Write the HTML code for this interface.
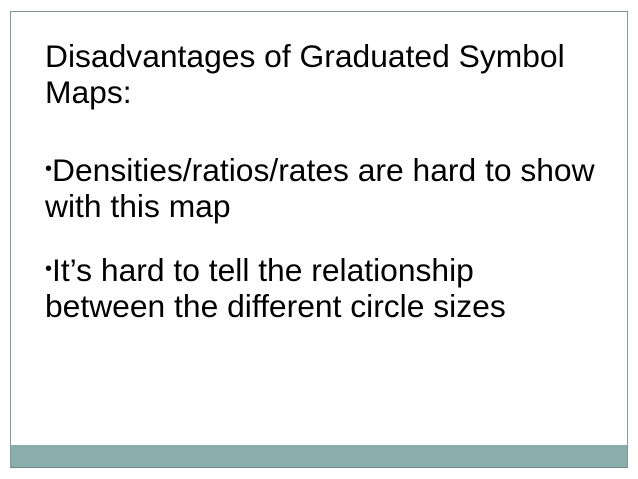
<!DOCTYPE html>
<html><head><style>
html,body{margin:0;padding:0;background:#fff;width:638px;height:479px;overflow:hidden}
.box{position:absolute;left:10px;top:11px;width:616px;height:455px;border:1px solid #849a9a;border-bottom:1px solid #6f8888}
.bar{position:absolute;left:11px;top:445px;width:616px;height:22px;background:#8aaeac;border-bottom:1px solid #6f8888}
.t{position:absolute;left:45px;font-family:"Liberation Sans",sans-serif;font-size:31.8px;line-height:36px;color:#000;white-space:nowrap}
.b{font-size:20px;vertical-align:6px}
</style></head><body>
<div class="box"></div>
<div class="bar"></div>
<div class="t" style="top:38px">Disadvantages of Graduated Symbol<br>Maps:</div>
<div class="t" style="top:151px"><span class="b">•</span>Densities/ratios/rates are hard to show<br>with this map</div>
<div class="t" style="top:251px"><span class="b">•</span>It’s hard to tell the relationship<br>between the different circle sizes</div>
</body></html>
